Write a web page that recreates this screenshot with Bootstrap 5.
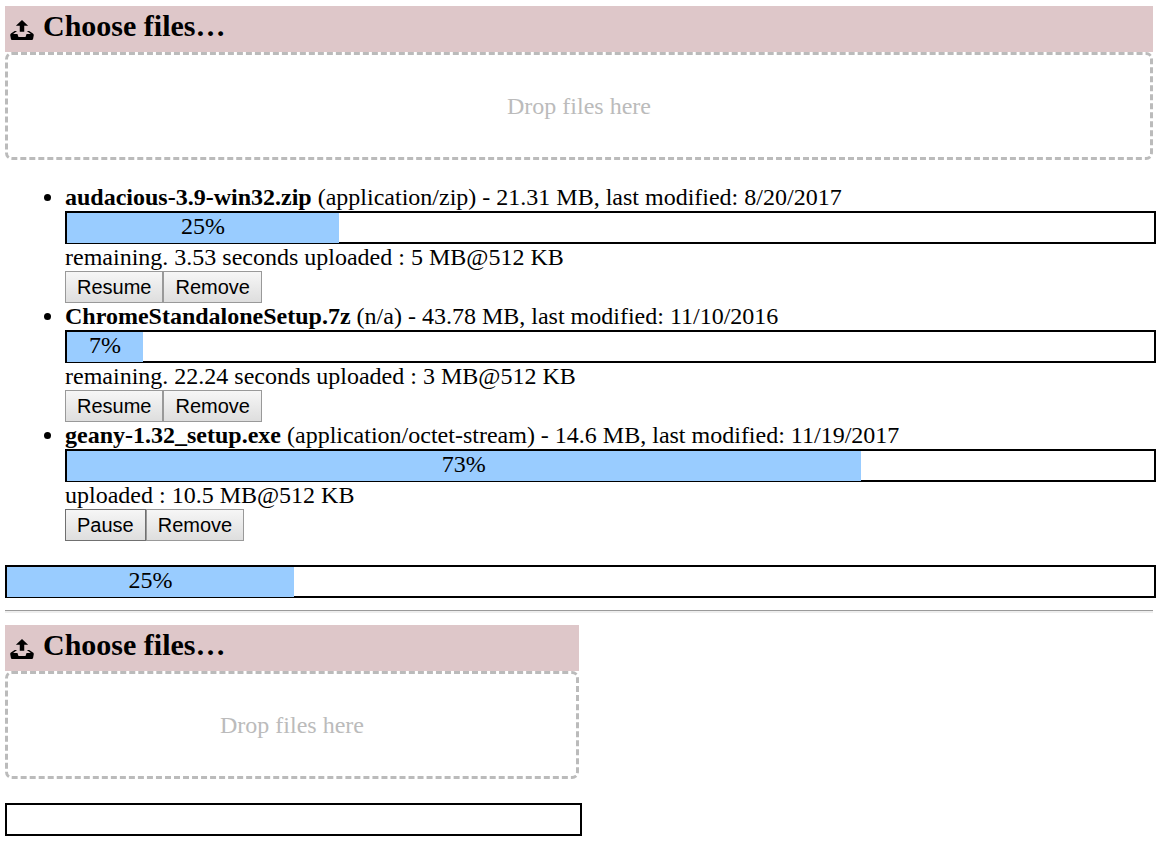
<!DOCTYPE html>
<html lang="en">
<head>
<meta charset="utf-8">
<meta name="viewport" content="width=device-width, initial-scale=1">
<title>File upload</title>
<link rel="stylesheet" href="https://cdn.jsdelivr.net/npm/bootstrap@5.3.0/dist/css/bootstrap.min.css">
<style>
body { font-family: "Liberation Serif", "Times New Roman", serif; font-size: 24px; line-height: 27px; color: #000; background: #fff; }
.page-pad { padding: 6px 7px 24px 5px; }
/* progress boxes are slightly wider than the picker above them */
.picker, .divider { margin-right: 3px; }
.half-width { width: calc((100% - 3px) / 2 + 3px); }
.choose { height: 46px; padding: 0 5px; background: #dec7c9; font-size: 30px; font-weight: 700; line-height: 40px; cursor: pointer; }
.choose svg { width: 24px; height: 20px; margin: 14px 9px 0 0; flex: none; }
.drop-area { height: 108px; border: 3px dashed #bbb; border-radius: 7px; color: #bbb; }
.file-list { margin: 24px 0; padding-left: 60px; }
.meter { height: 33px; border: 2px solid #000; }
.meter-fill { height: 30px; background: #9cf; text-align: center; }
.file-btn { height: 32px; padding: 0 11px; border: 1px solid #999; border-radius: 0; background: linear-gradient(#f6f6f6, #dedede); color: #000; font: 20px/28px "Liberation Sans", Arial, sans-serif; }
.file-btn.active-border { border-color: #707070; }
.divider { height: 3px; margin-top: 12px; margin-bottom: 12px; border: 0; border-top: 1px solid #9a9a9a; background: #eee; opacity: 1; }
</style>
</head>
<body>
<main class="page-pad">
  <section>
    <div class="picker">
      <input class="visually-hidden" type="file" id="files-main" multiple>
      <label class="choose d-flex align-items-start" for="files-main"><svg viewBox="0 0 20 17" aria-hidden="true"><path d="M10 0l-5.2 4.9h3.3v5.1h3.8v-5.1h3.3l-5.2-4.9zm9.3 11.5l-3.2-2.1h-2l3.4 2.6h-3.5c-.1 0-.2.1-.2.1l-.8 2.3h-6l-.8-2.2c-.1-.1-.1-.2-.2-.2h-3.6l3.4-2.6h-2l-3.2 2.1c-.4.3-.7 1-.6 1.5l.6 3.1c.1.5.7.9 1.2.9h16.3c.6 0 1.1-.4 1.3-.9l.6-3.1c.1-.5-.2-1.2-.7-1.5z"/></svg><span>Choose files…</span></label>
      <div class="drop-area d-flex align-items-center justify-content-center">Drop files here</div>
    </div>
    <ul class="file-list">
      <li>
        <div><strong>audacious-3.9-win32.zip</strong> (application/zip) - 21.31 MB, last modified: 8/20/2017</div>
        <div class="meter"><div class="meter-fill" style="width:25%">25%</div></div>
        <div>remaining. 3.53 seconds uploaded : 5 MB@512 KB</div>
        <div class="d-flex"><button type="button" class="file-btn">Resume</button><button type="button" class="file-btn">Remove</button></div>
      </li>
      <li>
        <div><strong>ChromeStandaloneSetup.7z</strong> (n/a) - 43.78 MB, last modified: 11/10/2016</div>
        <div class="meter"><div class="meter-fill" style="width:7%">7%</div></div>
        <div>remaining. 22.24 seconds uploaded : 3 MB@512 KB</div>
        <div class="d-flex"><button type="button" class="file-btn">Resume</button><button type="button" class="file-btn">Remove</button></div>
      </li>
      <li>
        <div><strong>geany-1.32_setup.exe</strong> (application/octet-stream) - 14.6 MB, last modified: 11/19/2017</div>
        <div class="meter"><div class="meter-fill" style="width:73%">73%</div></div>
        <div>uploaded : 10.5 MB@512 KB</div>
        <div class="d-flex"><button type="button" class="file-btn active-border">Pause</button><button type="button" class="file-btn">Remove</button></div>
      </li>
    </ul>
    <div class="meter"><div class="meter-fill" style="width:25%">25%</div></div>
  </section>
  <hr class="divider">
  <section class="half-width">
    <div class="picker mb-4">
      <input class="visually-hidden" type="file" id="files-second" multiple>
      <label class="choose d-flex align-items-start" for="files-second"><svg viewBox="0 0 20 17" aria-hidden="true"><path d="M10 0l-5.2 4.9h3.3v5.1h3.8v-5.1h3.3l-5.2-4.9zm9.3 11.5l-3.2-2.1h-2l3.4 2.6h-3.5c-.1 0-.2.1-.2.1l-.8 2.3h-6l-.8-2.2c-.1-.1-.1-.2-.2-.2h-3.6l3.4-2.6h-2l-3.2 2.1c-.4.3-.7 1-.6 1.5l.6 3.1c.1.5.7.9 1.2.9h16.3c.6 0 1.1-.4 1.3-.9l.6-3.1c.1-.5-.2-1.2-.7-1.5z"/></svg><span>Choose files…</span></label>
      <div class="drop-area d-flex align-items-center justify-content-center">Drop files here</div>
    </div>
    <div class="meter"></div>
  </section>
</main>
<script src="https://cdn.jsdelivr.net/npm/bootstrap@5.3.0/dist/js/bootstrap.bundle.min.js"></script>
</body>
</html>
